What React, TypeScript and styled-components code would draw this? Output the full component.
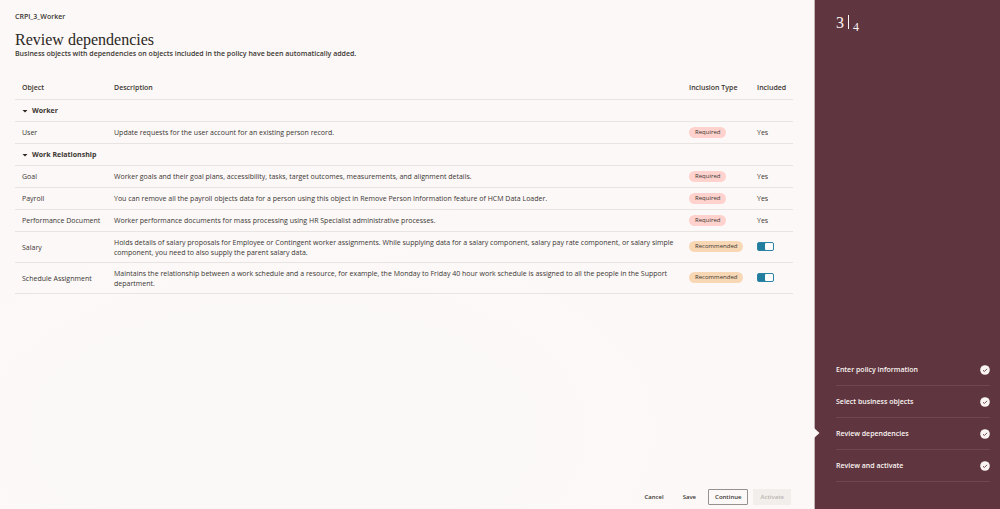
import React, { useState } from "react";
import styled, { createGlobalStyle } from "styled-components";

const sans = `"Open Sans", "Noto Sans", sans-serif`;
const serif = `Georgia, "Liberation Serif", serif`;
const ink = "#3a3632";
const plum = "#5f363f";

const GlobalStyle = createGlobalStyle`
  *, *::before, *::after { box-sizing: border-box; }
  body { margin: 0; background: #fcf8f7; color: ${ink}; font-family: ${sans}; font-size: 7px; line-height: 10px; }
  button { font: inherit; color: inherit; margin: 0; padding: 0; border: 0; background: none; cursor: pointer; }
`;

const Page = styled.div`
  display: flex;
  min-height: 100vh;
`;

const Main = styled.main`
  flex: 1;
  min-width: 0;
  display: flex;
  flex-direction: column;
  padding: 12px 21px 4px 15px;
  background: radial-gradient(ellipse 60% 50% at 35% 85%, #faf9f8, #fcf8f7);
`;

const PolicyName = styled.p`
  margin: 0;
  font-weight: 600;
`;

const Title = styled.h1`
  margin: 9px 0 0;
  font: 400 16px/18px ${serif};
  color: #2b2723;
`;

const Subtitle = styled.p`
  margin: 0 0 17px;
  font-weight: 600;
`;

const Table = styled.table`
  width: 100%;
  border-collapse: collapse;
  table-layout: fixed;
`;

const Column = styled.col<{ $width?: number }>`
  width: ${(p) => (p.$width ? `${p.$width}px` : "auto")};
`;

const Row = styled.tr`
  height: 22px;
  border-bottom: 1px solid #e8e4e2;
`;

const HeadCell = styled.th`
  height: 23px;
  padding: 2px 0 0 7px;
  text-align: left;
  font-weight: 600;
  white-space: nowrap;
`;

const GroupCell = styled.th`
  padding: 2px 7px 0;
  text-align: left;
`;

const GroupToggle = styled.button`
  display: flex;
  align-items: center;
  gap: 4px;
  font-weight: 700;
`;

const Cell = styled.td`
  padding: 6px 0 4px 7px;
  vertical-align: middle;
`;

const ControlCell = styled(Cell)`
  padding: 5px 0 5px 7px;
`;

const Badge = styled.span<{ $tone: Inclusion }>`
  display: block;
  width: fit-content;
  padding: 0 6px;
  border-radius: 6px;
  font-size: 6px;
  line-height: 11px;
  background: ${(p) => (p.$tone === "Required" ? "#ffd2ce" : "#f8d7b4")};
`;

const Switch = styled.input`
  appearance: none;
  display: block;
  width: 17px;
  height: 9px;
  margin: 0;
  border: 1px solid #2c84a4;
  border-radius: 2px;
  background: #fff;
  cursor: pointer;
  &::before {
    content: "";
    display: block;
    width: 8px;
    height: 7px;
    border-radius: 1px;
    background: #8a8580;
  }
  &:checked { background: #227e9e; }
  &:checked::before { margin-left: auto; background: #fff; }
`;

const Footer = styled.footer`
  display: flex;
  justify-content: flex-end;
  gap: 5px;
  margin-top: auto;
  padding-right: 2px;
`;

const Action = styled.button<{ $outlined?: boolean }>`
  height: 16px;
  padding: 0 6px;
  border: 1px solid ${(p) => (p.$outlined ? "#96918e" : "transparent")};
  border-radius: 1px;
  font-size: 6px;
  font-weight: 600;
  &:disabled { background: #f1eeec; color: #b9b5b2; cursor: default; }
`;

const Sidebar = styled.aside`
  flex: none;
  width: 186px;
  display: flex;
  flex-direction: column;
  justify-content: space-between;
  padding: 14px 10px 27px 21px;
  border-left: 1px solid #bfb3b4;
  background: ${plum};
  color: #fbf5f3;
`;

const Progress = styled.p`
  display: flex;
  margin: 0;
  font: 16px/18px ${serif};
`;

const Divider = styled.span`
  width: 1px;
  height: 14px;
  margin: 1px 4px 0;
  background: #fbf5f3;
`;

const Total = styled.span`
  padding-top: 4px;
  font-size: 12px;
`;

const Steps = styled.ol`
  list-style: none;
  margin: 0;
  padding: 0;
`;

const Step = styled.li`
  position: relative;
  border-bottom: 1px solid #70474f;
`;

const StepLink = styled.a`
  display: flex;
  align-items: center;
  justify-content: space-between;
  height: 31px;
  color: inherit;
  font-weight: 600;
  text-decoration: none;
`;

const Pointer = styled.svg`
  position: absolute;
  left: -22px;
  top: 10px;
`;

type Inclusion = "Required" | "Recommended";
type Item = { name: string; description: string; type: Inclusion };

const groups: { name: string; items: Item[] }[] = [
  {
    name: "Worker",
    items: [
      { name: "User", type: "Required", description: "Update requests for the user account for an existing person record." },
    ],
  },
  {
    name: "Work Relationship",
    items: [
      { name: "Goal", type: "Required", description: "Worker goals and their goal plans, accessibility, tasks, target outcomes, measurements, and alignment details." },
      { name: "Payroll", type: "Required", description: "You can remove all the payroll objects data for a person using this object in Remove Person Information feature of HCM Data Loader." },
      { name: "Performance Document", type: "Required", description: "Worker performance documents for mass processing using HR Specialist administrative processes." },
      { name: "Salary", type: "Recommended", description: "Holds details of salary proposals for Employee or Contingent worker assignments. While supplying data for a salary component, salary pay rate component, or salary simple component, you need to also supply the parent salary data." },
      { name: "Schedule Assignment", type: "Recommended", description: "Maintains the relationship between a work schedule and a resource, for example, the Monday to Friday 40 hour work schedule is assigned to all the people in the Support department." },
    ],
  },
];

const steps = ["Enter policy information", "Select business objects", "Review dependencies", "Review and activate"];
const currentStep = 2;

function Caret({ open }: { open: boolean }) {
  return (
    <svg width="6" height="6" viewBox="0 0 6 6" aria-hidden="true">
      <path d={open ? "M.5 2h5L3 4.6z" : "M2 .5v5L4.6 3z"} fill="#2b2723" />
    </svg>
  );
}

function CheckMark() {
  return (
    <svg width="10" height="10" viewBox="0 0 10 10" aria-hidden="true">
      <circle cx="5" cy="5" r="4.8" fill="#fbf5f3" />
      <path d="M3 5.2l1.4 1.3L7.1 3.8" fill="none" stroke={plum} strokeWidth="0.9" />
    </svg>
  );
}

function Group({ name, items }: { name: string; items: Item[] }) {
  const [open, setOpen] = useState(true);
  return (
    <tbody>
      <Row>
        <GroupCell colSpan={4} scope="rowgroup">
          <GroupToggle type="button" aria-expanded={open} onClick={() => setOpen(!open)}>
            <Caret open={open} />
            {name}
          </GroupToggle>
        </GroupCell>
      </Row>
      {open &&
        items.map((item) => (
          <Row key={item.name}>
            <Cell>{item.name}</Cell>
            <Cell>{item.description}</Cell>
            <ControlCell>
              <Badge $tone={item.type}>{item.type}</Badge>
            </ControlCell>
            {item.type === "Required" ? (
              <Cell>Yes</Cell>
            ) : (
              <ControlCell>
                <Switch type="checkbox" role="switch" defaultChecked aria-label={`Include ${item.name}`} />
              </ControlCell>
            )}
          </Row>
        ))}
    </tbody>
  );
}

export default function App() {
  return (
    <Page>
      <GlobalStyle />
      <Main>
        <PolicyName>CRPI_3_Worker</PolicyName>
        <Title>Review dependencies</Title>
        <Subtitle>Business objects with dependencies on objects included in the policy have been automatically added.</Subtitle>
        <Table>
          <colgroup>
            <Column $width={92} />
            <Column />
            <Column $width={68} />
            <Column $width={43} />
          </colgroup>
          <thead>
            <Row>
              <HeadCell scope="col">Object</HeadCell>
              <HeadCell scope="col">Description</HeadCell>
              <HeadCell scope="col">Inclusion Type</HeadCell>
              <HeadCell scope="col">Included</HeadCell>
            </Row>
          </thead>
          {groups.map((group) => (
            <Group key={group.name} {...group} />
          ))}
        </Table>
        <Footer>
          <Action type="button">Cancel</Action>
          <Action type="button">Save</Action>
          <Action type="button" $outlined>Continue</Action>
          <Action type="button" disabled>Activate</Action>
        </Footer>
      </Main>
      <Sidebar>
        <Progress>
          <span>3</span>
          <Divider />
          <Total>4</Total>
        </Progress>
        <Steps>
          {steps.map((step, index) => (
            <Step key={step}>
              {index === currentStep && (
                <Pointer width="6" height="10" viewBox="0 0 6 10" aria-hidden="true">
                  <path d="M0 0l5.5 5L0 10z" fill="#fcf8f7" />
                </Pointer>
              )}
              <StepLink href="#" aria-current={index === currentStep ? "step" : undefined}>
                {step}
                <CheckMark />
              </StepLink>
            </Step>
          ))}
        </Steps>
      </Sidebar>
    </Page>
  );
}
